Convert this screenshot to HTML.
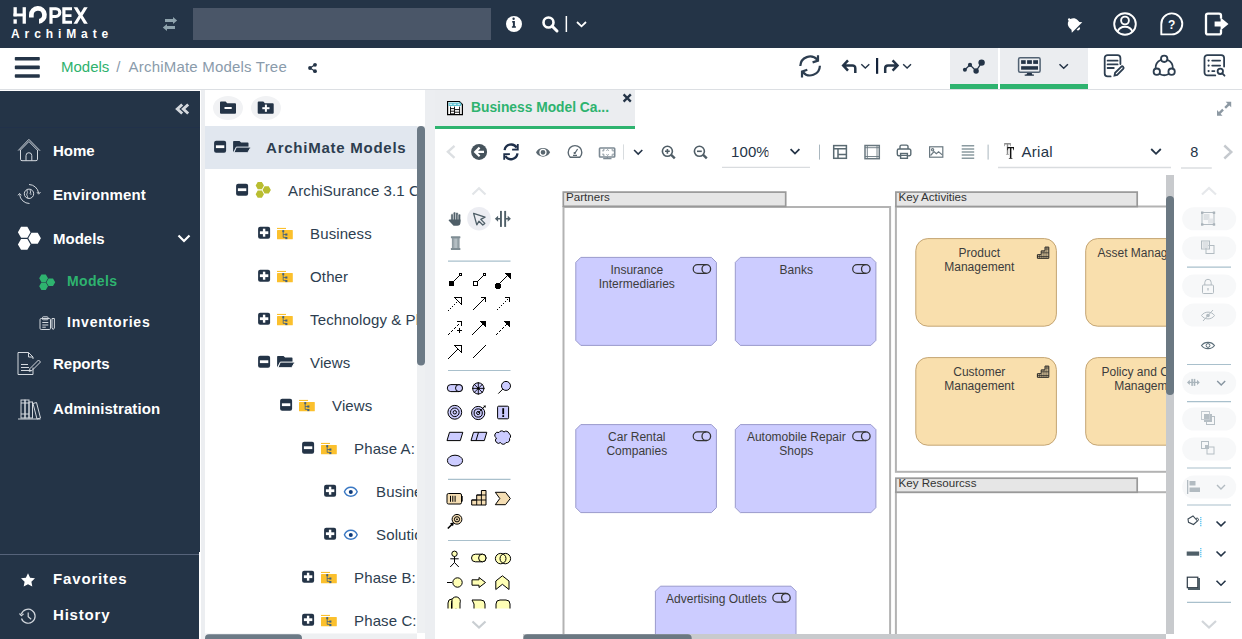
<!DOCTYPE html>
<html><head><meta charset="utf-8">
<style>
*{margin:0;padding:0;box-sizing:border-box}
html,body{width:1242px;height:639px;overflow:hidden;background:#fff;font-family:"Liberation Sans",sans-serif;position:relative}
.a{position:absolute}
svg{position:absolute;overflow:visible}
#hdr{left:0;top:0;width:1242px;height:48px;background:#243447}
#crumb{left:0;top:48px;width:1242px;height:42px;background:#fff;border-bottom:1px solid #dcdfe3}
#side{left:0;top:91px;width:200px;height:548px;background:#243447}
#gap{left:201px;top:90px;width:4px;height:549px;background:#eceef1}
#tree{left:205px;top:90px;width:220px;height:549px;background:#fff;overflow:hidden}
#gap2{left:425px;top:90px;width:10px;height:549px;background:#eceef1}
.mi{position:absolute;left:53px;color:#fff;font-weight:700;font-size:15px;white-space:nowrap;line-height:1}
.tr{position:absolute;color:#2d3e50;font-size:15px;white-space:nowrap;line-height:1}
</style></head><body>

<div id="hdr" class="a">
 <svg width="200" height="48" style="left:0;top:0">
  <g fill="#fff">
   <rect x="13.5" y="7.2" width="3.3" height="9.1"/>
   <rect x="13.5" y="19.3" width="3.3" height="4.4"/>
   <rect x="13.5" y="13.5" width="12" height="2.9"/>
   <rect x="22.6" y="7.2" width="3.3" height="16.5"/>
   <path d="M49.4 7.2h6.6a5.35 5.35 0 0 1 0 10.7h-3.4v5.8h-3.2zM52.6 10.2v4.7h3.3a2.35 2.35 0 0 0 0-4.7z"/>
   <path d="M62.3 7.2h9.7v3h-6.5v4.1h6v2.8h-6v3.6h6.5v3h-9.7z"/>
   <path d="M73.6 7.2h3.8l3.3 5.6l3.3-5.6h3.7l-5.1 8.2l5.2 8.3h-3.8l-3.4-5.7l-3.4 5.7h-3.7l5.2-8.3z"/>
  </g>
  <path d="M29 17.5V15A8.9 8.9 0 1 1 39 23.83V19.05A4.2 4.2 0 1 0 33.7 15V17.5Z" fill="#fff"/>
  <text x="11" y="37.7" fill="#fff" font-family="Liberation Sans" font-weight="700" font-size="12" letter-spacing="4.9">ArchiMate</text>
  <g fill="#8fa3ad">
   <path d="M165 19.1h8v-2.2l4.1 3.6l-4.1 3.5v-2h-8z"/>
   <path d="M175 25.9h-8v-1.9l-4.2 3.5l4.2 3.5v-2.1h8z"/>
  </g>
 </svg>
 <div class="a" style="left:193px;top:8px;width:298px;height:32px;background:#4a5668"></div>
 <svg width="100" height="48" style="left:500px;top:0">
  <circle cx="14" cy="24" r="8" fill="#fff"/>
  <path d="M12.3 21h2.6v5.3h1v1.4h-4v-1.4h1v-3.9h-0.9z M13.6 17.6a1.2 1.2 0 1 1 0 2.4a1.2 1.2 0 1 1 0-2.4z" fill="#243447"/>
  <circle cx="48.5" cy="22.5" r="5" fill="none" stroke="#fff" stroke-width="2.6"/>
  <path d="M52 26l5 5" stroke="#fff" stroke-width="3" stroke-linecap="round"/>
  <rect x="65.6" y="16" width="1.5" height="16" fill="#fff"/>
  <path d="M77 22l4.5 4.3l4.5-4.3" fill="none" stroke="#fff" stroke-width="1.8"/>
 </svg>
 <svg width="180" height="48" style="left:1062px;top:0">
  <g transform="translate(11.6 24) rotate(-45)">
   <path d="M0 -7.5c-0.7 0-1.2 0.5-1.2 1.1v0.7c-2.8 0.6-4.4 2.9-4.4 5.6v2.7l-1.8 2.3h14.8l-1.8-2.3v-2.7c0-2.7-1.6-5-4.4-5.6v-0.7c0-0.6-0.5-1.1-1.2-1.1zM-2 6.2a2 2 0 0 0 4 0z" fill="#fff"/>
  </g>
  <circle cx="63" cy="24" r="10.8" fill="none" stroke="#fff" stroke-width="1.9"/>
  <circle cx="63" cy="20.5" r="3.9" fill="none" stroke="#fff" stroke-width="1.9"/>
  <path d="M55.5 32c1.2-3.5 4-5.2 7.5-5.2s6.3 1.7 7.5 5.2" fill="none" stroke="#fff" stroke-width="1.9"/>
  <path d="M99.3 34.4v-10.2a10.5 10.5 0 1 1 10.5 10.2z" fill="none" stroke="#fff" stroke-width="1.9" stroke-linejoin="round"/>
  <text x="109.6" y="29" fill="#fff" font-family="Liberation Sans" font-weight="700" font-size="12" text-anchor="middle">?</text>
  <path d="M159 18.5V15.6a2 2 0 0 0-2-2h-11a2 2 0 0 0-2 2v16.8a2 2 0 0 0 2 2h11a2 2 0 0 0 2-2v-3" fill="none" stroke="#fff" stroke-width="2.3"/>
  <path d="M152.6 21.6h6v-4.2l7.9 6.6l-7.9 6.6v-4.2h-6z" fill="#fff"/>
 </svg>
</div>


<div id="crumb" class="a">
 <svg width="60" height="42" style="left:0;top:0">
  <g fill="#243447"><rect x="14.8" y="9" width="25" height="3.6" rx="0.8"/><rect x="14.8" y="17.6" width="25" height="3.6" rx="0.8"/><rect x="14.8" y="26.2" width="25" height="3.6" rx="0.8"/></g>
 </svg>
 <div class="a" style="left:61px;top:10px;font-size:15px;line-height:18px;white-space:nowrap;color:#8a9bab"><span style="color:#2eb26d">Models</span><span style="margin:0 8px 0 7px">/</span><span style="letter-spacing:0.2px">ArchiMate Models Tree</span></div>
 <svg width="1242" height="90" style="left:0;top:-48px">
  <g fill="#243447"><circle cx="310" cy="68" r="1.9"/><circle cx="315" cy="64.8" r="1.9"/><circle cx="315" cy="71.2" r="1.9"/></g>
  <path d="M315 64.8L310 68L315 71.2" stroke="#243447" stroke-width="1.2" fill="none"/>
  <g fill="none" stroke="#2d3e50" stroke-width="2.2">
   <path d="M800.3 66A9.8 9.8 0 0 1 817.4 59.8"/>
   <path d="M818 55.2V60.6L812.6 62.4"/>
   <path d="M819.9 65.8A9.8 9.8 0 0 1 802.7 72"/>
   <path d="M802 77.4V71.6L807.3 69.8"/>
  </g>
  <g fill="none" stroke="#243447" stroke-width="2.5">
   <path d="M848 60.3L843.2 65.4L848 70.6M843.2 65.4H852.5a2.8 2.8 0 0 1 2.8 2.8V73"/>
   <path d="M892.6 60.3L897.5 65.4L892.6 70.6M897.5 65.4H888a2.8 2.8 0 0 0-2.8 2.8V73"/>
  </g>
  <g fill="none" stroke="#243447" stroke-width="1.4">
   <path d="M861.3 64.2L865.3 68L869.3 64.2"/>
   <path d="M903.2 64.2L907.1 68L911 64.2"/>
  </g>
  <rect x="876" y="58" width="2.2" height="15.8" fill="#14233a"/>
  <rect x="950" y="48" width="48" height="36" fill="#ebedf0"/>
  <rect x="950" y="84" width="48" height="5" fill="#2eb36f"/>
  <rect x="1000" y="48" width="88" height="36" fill="#ebedf0"/>
  <rect x="1000" y="84" width="88" height="5" fill="#2eb36f"/>
  <g fill="#243447">
   <circle cx="964.9" cy="69.7" r="2"/><circle cx="970" cy="64.9" r="2.1"/><circle cx="976.1" cy="71" r="2.7"/><circle cx="981.6" cy="62.6" r="3.2"/>
  </g>
  <path d="M964.9 69.7L970 64.9L976.1 71L981.6 62.6" stroke="#243447" stroke-width="1.3" fill="none"/>
  <rect x="1018.6" y="57.7" width="21.5" height="14.6" rx="1.5" fill="none" stroke="#526273" stroke-width="1.5"/>
  <g fill="#243447">
   <rect x="1021.1" y="60.2" width="4.6" height="3.7"/><rect x="1027.1" y="60.2" width="4.8" height="3.7"/><rect x="1033.2" y="60.2" width="4.8" height="3.7"/>
   <rect x="1021.1" y="66.2" width="16.9" height="3.5"/>
   <path d="M1027.3 72.9h4.4l0.6 1.6h1.6v1.3h-9.2v-1.3h1.6z"/>
  </g>
  <path d="M1059.5 64.3L1063.7 68.3L1067.9 64.3" stroke="#243447" stroke-width="1.5" fill="none"/>
  <g fill="none" stroke="#2d3e50" stroke-width="1.8" stroke-linecap="round">
   <path d="M1120.4 64V58a2.9 2.9 0 0 0-2.9-2.9H1107.6a2.9 2.9 0 0 0-2.9 2.9V73.5a2.9 2.9 0 0 0 2.9 2.9H1110.6"/>
   <path d="M1107.6 60.7H1117.6M1107.6 64.4H1117.6M1107.6 68H1113.8"/>
   <path d="M1114.5 75.6l0.6-2.8l6-6a1.45 1.45 0 0 1 2.1 2.1l-6 6z"/>
   <circle cx="1164.2" cy="58.8" r="3.2"/><circle cx="1156.8" cy="71.7" r="3.2"/><circle cx="1171.6" cy="71.7" r="3.2"/>
   <path d="M1160.7 60A8.7 8.7 0 0 0 1155.6 68.3M1167.7 60A8.7 8.7 0 0 1 1172.8 68.3M1160.2 74.2A8.7 8.7 0 0 0 1168.2 74.2"/>
   <path d="M1224.1 66.5V58a2.9 2.9 0 0 0-2.9-2.9H1207.4a2.9 2.9 0 0 0-2.9 2.9V72.5a2.9 2.9 0 0 0 2.9 2.9H1215.3"/>
   <path d="M1212.2 60.6H1220.1M1212.2 65.6H1220.1M1212.2 71.1H1214.4"/>
   <circle cx="1220.3" cy="71.3" r="2.7"/><path d="M1222.3 73.4L1224.5 75.7"/>
  </g>
  <g fill="#2d3e50"><circle cx="1208.6" cy="60.6" r="1.1"/><circle cx="1208.6" cy="65.6" r="1.1"/><circle cx="1208.6" cy="71.1" r="1.1"/></g>
 </svg>
</div>


<div id="side" class="a"></div>
<div class="a" style="left:0;top:554px;width:199px;height:1px;background:#56637a"></div><div class="a" style="left:0;top:127px;width:200px;height:1px;background:#21314a"></div><div class="a" style="left:200px;top:91px;width:1px;height:461px;background:#fff"></div><div class="a" style="left:199px;top:552px;width:2px;height:87px;background:#fff"></div>
<svg width="210" height="639" style="left:0;top:0">
 <path d="M182.2 104.5L177.3 109L182.2 113.5M188.2 104.5L183.3 109L188.2 113.5" fill="none" stroke="#d5d9de" stroke-width="2.9"/>
 <g fill="none" stroke="#d3d8de" stroke-width="1">
  <path d="M18.2 150.5L28.9 139.4L40 150.7M20 150.5L28.9 141.5L37.9 150.6"/>
  <path d="M20.5 150V159.2a1.5 1.5 0 0 0 1.5 1.5H36a1.5 1.5 0 0 0 1.5-1.5V150"/>
  <path d="M26 160.7V155.6a2.9 2.9 0 0 1 5.8 0V160.7"/>
  <circle cx="29" cy="193.8" r="4.7"/>
  <path d="M27.6 189.5c-1.4 1.3 0.6 2.6-0.6 4c-0.9 1.1 0.6 2.3 0.9 4.5M30.6 189.4c-1.2 1.2 0.9 2.3-0.4 3.6c-0.6 0.7 0.2 1.4 1.3 1.1"/>
  <path d="M29 184.5A10 10 0 0 1 38.6 193"/>
  <path d="M37 192.2L38.6 194.2L40.5 192"/>
  <path d="M29.5 203.5A10 10 0 0 1 19.6 194.4"/>
  <path d="M18 195.3L19.6 193.4L21.4 195.3"/>
 </g>
 <path d="M30.50 232.20L27.35 237.66L21.05 237.66L17.90 232.20L21.05 226.74L27.35 226.74ZM40.90 238.30L37.75 243.76L31.45 243.76L28.30 238.30L31.45 232.84L37.75 232.84ZM30.50 244.40L27.35 249.86L21.05 249.86L17.90 244.40L21.05 238.94L27.35 238.94Z" fill="#fff"/>
 <path d="M178.5 235.5L184 241L189.5 235.5" fill="none" stroke="#fff" stroke-width="2.2"/>
 <path d="M48.00 278.20L45.80 282.01L41.40 282.01L39.20 278.20L41.40 274.39L45.80 274.39ZM55.20 282.20L53.00 286.01L48.60 286.01L46.40 282.20L48.60 278.39L53.00 278.39ZM48.00 286.20L45.80 290.01L41.40 290.01L39.20 286.20L41.40 282.39L45.80 282.39Z" fill="#2eb36f"/>
 <g fill="none" stroke="#d3d8de" stroke-width="1">
  <rect x="40" y="318.5" width="10.5" height="11" rx="1.2"/>
  <rect x="42.5" y="316.8" width="5.5" height="3" rx="0.8"/>
  <path d="M42.3 322.5h6M42.3 325h6M42.3 327.2h3.5"/>
  <path d="M52 318.5v9.5l1.2 1.5l1.2-1.5v-9.5z"/>
  <path d="M18 352.5h10.5l4.5 4.5v2M18 352.5v22h15v-7"/>
  <path d="M28.5 352.5v4.5h4.5"/>
  <path d="M21 364.5h7M21 367.5h8M21 370.5h10"/>
  <path d="M30 368.5l8.5-8.5l2 2l-8.5 8.5l-2.8 0.8z"/>
  <path d="M18 419h22.5"/>
  <rect x="21" y="400" width="4" height="18"/><rect x="25" y="400" width="4" height="18"/><rect x="29" y="402" width="3.5" height="16"/>
  <path d="M33 403.5l3.5-1l4 15.5l-3.5 1z"/>
  <path d="M21 403h8M21 414h8"/>
 </g>
 <path d="M28 573.2l2.1 4.5l4.9 0.6l-3.6 3.4l0.9 4.9l-4.3-2.4l-4.3 2.4l0.9-4.9l-3.6-3.4l4.9-0.6z" fill="#fff"/>
 <g fill="none" stroke="#d3d8de" stroke-width="1.2">
  <path d="M21.4 614.2A7 7 0 1 1 21.5 618.5"/>
  <path d="M19.5 613.5l1.9 2.2l2.2-1.8" />
  <path d="M28.2 612.5v4.3l3 2.5"/>
 </g>
 <g font-family="Liberation Sans" font-weight="700" font-size="15" fill="#fff">
  <text x="53" y="155.6">Home</text>
  <text x="53" y="199.6" letter-spacing="0.1">Environment</text>
  <text x="53" y="243.6">Models</text>
  <text x="67" y="286.2" font-size="14" fill="#2eb36f" letter-spacing="0.35">Models</text>
  <text x="67" y="327.2" font-size="14" letter-spacing="0.8">Inventories</text>
  <text x="53" y="369.3">Reports</text>
  <text x="53" y="413.7" letter-spacing="0.1">Administration</text>
  <text x="53" y="584" letter-spacing="0.85">Favorites</text>
  <text x="53" y="620.4" letter-spacing="0.8">History</text>
 </g>
</svg>

<div id="gap" class="a"></div>

<div id="tree" class="a">
 <svg width="220" height="549" style="left:-205px;top:-90px">
  <defs><clipPath id="tc"><rect x="205" y="90" width="212" height="549"/></clipPath></defs>
  <ellipse cx="228" cy="108" rx="15" ry="12" fill="#f1f2f4"/>
  <ellipse cx="266" cy="108" rx="15" ry="12" fill="#f1f2f4"/>
  <path d="M220 102.6a1 1 0 0 1 1-1h4.6l1.6 1.6h7.8a1 1 0 0 1 1 1v8.6a1 1 0 0 1-1 1h-14a1 1 0 0 1-1-1z" fill="#243447"/>
  <rect x="224.5" y="107" width="7.2" height="2" fill="#fff"/>
  <path d="M257.7 102.6a1 1 0 0 1 1-1h4.6l1.6 1.6h7.8a1 1 0 0 1 1 1v8.6a1 1 0 0 1-1 1h-14a1 1 0 0 1-1-1z" fill="#243447"/>
  <rect x="262.3" y="107.2" width="7.2" height="2" fill="#fff"/><rect x="264.9" y="104.6" width="2" height="7.2" fill="#fff"/>
  <rect x="205" y="126" width="212" height="43" fill="#e1e7ef"/>
  <g clip-path="url(#tc)">
  <rect x="214.1" y="140.7" width="12" height="12" rx="2" fill="#243447"/><rect x="215.9" y="145.3" width="8.4" height="2.8" fill="#fff"/><path d="M233.1 149.7V141.7a0.8 0.8 0 0 1 0.8-0.8h5.6l1.6 1.6h6.6a0.8 0.8 0 0 1 0.8 0.8V147.1H236.3L233.1 152.3Z" fill="#243447"/><path d="M236.3 147.1H251.0L247.6 152.7H233.9Z" fill="#243447" stroke="#e1e7ef" stroke-width="1"/><rect x="236.1" y="183.7" width="12" height="12" rx="2" fill="#243447"/><rect x="237.9" y="188.3" width="8.4" height="2.8" fill="#fff"/><path d="M263.95 185.60L261.88 189.19L257.73 189.19L255.65 185.60L257.73 182.01L261.88 182.01ZM270.85 189.90L268.77 193.49L264.62 193.49L262.55 189.90L264.62 186.31L268.77 186.31ZM263.95 194.20L261.88 197.79L257.73 197.79L255.65 194.20L257.73 190.61L261.88 190.61Z" fill="#b9bd30"/><rect x="258.1" y="226.7" width="12" height="12" rx="2" fill="#243447"/><rect x="259.90000000000003" y="231.3" width="8.4" height="2.8" fill="#fff"/><rect x="262.90000000000003" y="228.7" width="2.4" height="8" fill="#fff"/><rect x="277.0" y="227.9" width="9" height="1.1" fill="#fbc02d"/><rect x="277.0" y="229.9" width="15.8" height="9.4" rx="0.6" fill="#fbc02d"/><path d="M283.2 231.2v6.2h2.9M283.2 234.5h2.9" stroke="#41607e" stroke-width="0.8" fill="none"/><rect x="282.3" y="230.1" width="1.9" height="2.1" fill="#41607e"/><rect x="285.3" y="233.5" width="2.1" height="2.1" fill="#41607e"/><rect x="285.3" y="237.0" width="2.1" height="2.1" fill="#41607e"/><rect x="258.1" y="269.7" width="12" height="12" rx="2" fill="#243447"/><rect x="259.90000000000003" y="274.3" width="8.4" height="2.8" fill="#fff"/><rect x="262.90000000000003" y="271.7" width="2.4" height="8" fill="#fff"/><rect x="277.0" y="270.9" width="9" height="1.1" fill="#fbc02d"/><rect x="277.0" y="272.9" width="15.8" height="9.4" rx="0.6" fill="#fbc02d"/><path d="M283.2 274.2v6.2h2.9M283.2 277.5h2.9" stroke="#41607e" stroke-width="0.8" fill="none"/><rect x="282.3" y="273.1" width="1.9" height="2.1" fill="#41607e"/><rect x="285.3" y="276.5" width="2.1" height="2.1" fill="#41607e"/><rect x="285.3" y="280.0" width="2.1" height="2.1" fill="#41607e"/><rect x="258.1" y="312.7" width="12" height="12" rx="2" fill="#243447"/><rect x="259.90000000000003" y="317.3" width="8.4" height="2.8" fill="#fff"/><rect x="262.90000000000003" y="314.7" width="2.4" height="8" fill="#fff"/><rect x="277.0" y="313.9" width="9" height="1.1" fill="#fbc02d"/><rect x="277.0" y="315.9" width="15.8" height="9.4" rx="0.6" fill="#fbc02d"/><path d="M283.2 317.2v6.2h2.9M283.2 320.5h2.9" stroke="#41607e" stroke-width="0.8" fill="none"/><rect x="282.3" y="316.1" width="1.9" height="2.1" fill="#41607e"/><rect x="285.3" y="319.5" width="2.1" height="2.1" fill="#41607e"/><rect x="285.3" y="323.0" width="2.1" height="2.1" fill="#41607e"/><rect x="258.1" y="355.7" width="12" height="12" rx="2" fill="#243447"/><rect x="259.90000000000003" y="360.3" width="8.4" height="2.8" fill="#fff"/><path d="M277.1 364.7V356.7a0.8 0.8 0 0 1 0.8-0.8h5.6l1.6 1.6h6.6a0.8 0.8 0 0 1 0.8 0.8V362.1H280.3L277.1 367.3Z" fill="#243447"/><path d="M280.3 362.1H295.0L291.6 367.7H277.9Z" fill="#243447" stroke="#fff" stroke-width="1"/><rect x="280.1" y="398.7" width="12" height="12" rx="2" fill="#243447"/><rect x="281.90000000000003" y="403.3" width="8.4" height="2.8" fill="#fff"/><rect x="299.0" y="399.9" width="9" height="1.1" fill="#fbc02d"/><rect x="299.0" y="401.9" width="15.8" height="9.4" rx="0.6" fill="#fbc02d"/><path d="M305.2 403.2v6.2h2.9M305.2 406.5h2.9" stroke="#41607e" stroke-width="0.8" fill="none"/><rect x="304.3" y="402.1" width="1.9" height="2.1" fill="#41607e"/><rect x="307.3" y="405.5" width="2.1" height="2.1" fill="#41607e"/><rect x="307.3" y="409.0" width="2.1" height="2.1" fill="#41607e"/><rect x="302.1" y="441.7" width="12" height="12" rx="2" fill="#243447"/><rect x="303.90000000000003" y="446.3" width="8.4" height="2.8" fill="#fff"/><rect x="321.0" y="442.9" width="9" height="1.1" fill="#fbc02d"/><rect x="321.0" y="444.9" width="15.8" height="9.4" rx="0.6" fill="#fbc02d"/><path d="M327.2 446.2v6.2h2.9M327.2 449.5h2.9" stroke="#41607e" stroke-width="0.8" fill="none"/><rect x="326.3" y="445.1" width="1.9" height="2.1" fill="#41607e"/><rect x="329.3" y="448.5" width="2.1" height="2.1" fill="#41607e"/><rect x="329.3" y="452.0" width="2.1" height="2.1" fill="#41607e"/><rect x="324.1" y="484.7" width="12" height="12" rx="2" fill="#243447"/><rect x="325.90000000000003" y="489.3" width="8.4" height="2.8" fill="#fff"/><rect x="328.90000000000003" y="486.7" width="2.4" height="8" fill="#fff"/><path d="M344.4 491.7C346.9 485.7 354.7 485.7 357.2 491.7C354.7 497.7 346.9 497.7 344.4 491.7z" fill="none" stroke="#3a78c3" stroke-width="1.4"/><circle cx="350.8" cy="491.9" r="2" fill="#0d3a7a"/><rect x="324.1" y="527.7" width="12" height="12" rx="2" fill="#243447"/><rect x="325.90000000000003" y="532.3" width="8.4" height="2.8" fill="#fff"/><rect x="328.90000000000003" y="529.7" width="2.4" height="8" fill="#fff"/><path d="M344.4 534.7C346.9 528.7 354.7 528.7 357.2 534.7C354.7 540.7 346.9 540.7 344.4 534.7z" fill="none" stroke="#3a78c3" stroke-width="1.4"/><circle cx="350.8" cy="534.9" r="2" fill="#0d3a7a"/><rect x="302.1" y="570.7" width="12" height="12" rx="2" fill="#243447"/><rect x="303.90000000000003" y="575.3" width="8.4" height="2.8" fill="#fff"/><rect x="306.90000000000003" y="572.7" width="2.4" height="8" fill="#fff"/><rect x="321.0" y="571.9" width="9" height="1.1" fill="#fbc02d"/><rect x="321.0" y="573.9" width="15.8" height="9.4" rx="0.6" fill="#fbc02d"/><path d="M327.2 575.2v6.2h2.9M327.2 578.5h2.9" stroke="#41607e" stroke-width="0.8" fill="none"/><rect x="326.3" y="574.1" width="1.9" height="2.1" fill="#41607e"/><rect x="329.3" y="577.5" width="2.1" height="2.1" fill="#41607e"/><rect x="329.3" y="581.0" width="2.1" height="2.1" fill="#41607e"/><rect x="302.1" y="613.7" width="12" height="12" rx="2" fill="#243447"/><rect x="303.90000000000003" y="618.3" width="8.4" height="2.8" fill="#fff"/><rect x="306.90000000000003" y="615.7" width="2.4" height="8" fill="#fff"/><rect x="321.0" y="614.9" width="9" height="1.1" fill="#fbc02d"/><rect x="321.0" y="616.9" width="15.8" height="9.4" rx="0.6" fill="#fbc02d"/><path d="M327.2 618.2v6.2h2.9M327.2 621.5h2.9" stroke="#41607e" stroke-width="0.8" fill="none"/><rect x="326.3" y="617.1" width="1.9" height="2.1" fill="#41607e"/><rect x="329.3" y="620.5" width="2.1" height="2.1" fill="#41607e"/><rect x="329.3" y="624.0" width="2.1" height="2.1" fill="#41607e"/>
  <g font-family="Liberation Sans" font-size="15" fill="#2d3e50"><text x="266.1" y="152.8" font-weight="700" letter-spacing="0.75">ArchiMate Models</text><text x="288.1" y="195.8" letter-spacing="0.1">ArchiSurance 3.1 Capabilities</text><text x="310.1" y="238.8" letter-spacing="0.1">Business</text><text x="310.1" y="281.8" letter-spacing="0.1">Other</text><text x="310.1" y="324.8" letter-spacing="0.1">Technology &amp; Physical</text><text x="310.1" y="367.8" letter-spacing="0.1">Views</text><text x="332.1" y="410.8" letter-spacing="0.1">Views</text><text x="354.1" y="453.8" letter-spacing="0.1">Phase A: Architecture</text><text x="376.1" y="496.8" letter-spacing="0.1">Business Model</text><text x="376.1" y="539.8" letter-spacing="0.1">Solution</text><text x="354.1" y="582.8" letter-spacing="0.1">Phase B: Business</text><text x="354.1" y="625.8" letter-spacing="0.1">Phase C: Data</text></g>
  </g>
  <rect x="417" y="126" width="8" height="507" fill="#eef0f2"/>
  <rect x="417" y="126" width="8" height="239.5" rx="4" fill="#6c7a86"/>
  <rect x="205" y="633.5" width="212" height="6" fill="#eef0f2"/>
  <rect x="205" y="634.2" width="97" height="8" rx="4" fill="#6c7a86"/>
 </svg>
</div>


<div id="gap2" class="a"></div>
<svg width="1242" height="639" style="left:0;top:0">
 <rect x="435" y="90" width="200" height="36" fill="#ebedf0"/>
 <rect x="435" y="126" width="200" height="3" fill="#2eb36f"/>
 <g>
  <path d="M447.6 101.5H459.4L462.4 104.5V114.6H447.6Z" fill="#fff" stroke="#000" stroke-width="1.2"/>
  <rect x="448.6" y="102.6" width="12.6" height="3.4" fill="#5ec3d4"/>
  <path d="M449.6 104.3h2.6M453.6 104.3h2.6M457.6 104.3h2.4" stroke="#fff" stroke-width="0.9"/>
  <path d="M450.5 106.6V114M454.5 106.6V114M459.6 106.6V114M450.5 108.6H454.5M450.5 111.2H454.5M455 109.6H459.6M455 112.2H459.6" stroke="#000" stroke-width="0.9" fill="none"/>
  <path d="M450.5 113.8H454.5" stroke="#000" stroke-width="0.9"/>
 </g>
 <text x="471" y="112.2" font-family="Liberation Sans" font-weight="700" font-size="13.8" fill="#2eb36f">Business Model Ca...</text>
 <path d="M623.6 94.4l7.2 7.2M630.8 94.4l-7.2 7.2" stroke="#243447" stroke-width="2.3"/>
 <g fill="#8d99a3">
  <path d="M1231.2 101.7v5.6l-1.9-1.9l-3.3 3.3l-1.7-1.7l3.3-3.3l-1.9-2z"/>
  <path d="M1217 115.7v-5.6l1.9 1.9l3.3-3.3l1.7 1.7l-3.3 3.3l1.9 2z"/>
 </g>
 <!-- toolbar -->
 <path d="M454.5 145.8L447.9 151.8L454.5 157.9" fill="none" stroke="#dcdfe2" stroke-width="2.4"/>
 <circle cx="479.1" cy="151.9" r="8" fill="#46535c"/>
 <path d="M479.6 147.6L475.2 151.9L479.6 156.2M475.5 151.9H484" fill="none" stroke="#fff" stroke-width="2.2"/>
 <g fill="none" stroke="#1e2f4a" stroke-width="2.3">
  <path d="M504.6 150.2A6.6 6.6 0 0 1 516.7 147.6"/>
  <path d="M517.5 153.4A6.6 6.6 0 0 1 505.3 156"/>
 </g>
 <path d="M516.9 143.9h1.8v6.6h-6.6v-1.8l4.8-0.3z" fill="#1e2f4a"/>
 <path d="M505.1 159.8h-1.8v-6.6h6.6v1.8l-4.8 0.3z" fill="#1e2f4a"/>
 <path d="M536 152.3C538.5 146.5 547.6 146.5 550.1 152.3C547.6 158.1 538.5 158.1 536 152.3z" fill="#5a6770"/>
 <circle cx="543" cy="152.3" r="3" fill="none" stroke="#fff" stroke-width="1.3"/>
 <circle cx="543" cy="152.3" r="1.3" fill="#5a6770"/>
 <g fill="none" stroke="#5a6770" stroke-width="1.4">
  <path d="M570.2 157.2A6.8 6.8 0 1 1 579.8 157.2Z" stroke-linejoin="round"/>
  <path d="M573 155.3h4M574.6 153.6l3-4.6" stroke-width="1.2"/>
 </g>
 <circle cx="574.6" cy="153" r="1.1" fill="#5a6770"/>
 <g fill="none" stroke="#7d8a94">
  <rect x="599.5" y="148" width="15.2" height="9" rx="0.8" stroke-width="1.6"/>
  <path d="M603.2 158.6h8.3M607.3 157v1.6" stroke-width="1.2"/>
  <path d="M603 151.5v-1.6h1.6M611.5 149.9h1.6v1.6M613.1 153.5v1.6h-1.6M604.6 155.1h-1.6v-1.6M606.5 150.5l1.1-0.8l1.1 0.8M606.5 154.5l1.1 0.8l1.1-0.8" stroke-width="1"/>
 </g>
 <rect x="623" y="144.4" width="1" height="15.2" fill="#d8dcdf"/>
 <path d="M634.1 150L638.2 154.1L642.3 150" fill="none" stroke="#243447" stroke-width="1.6"/>
 <g fill="none" stroke="#4f5d66" stroke-width="1.6">
  <circle cx="667.4" cy="151.3" r="5"/><path d="M665 151.3h4.8M667.4 148.9v4.8"/>
  <circle cx="699.4" cy="151.3" r="5"/><path d="M697 151.3h4.8"/>
 </g>
 <path d="M671.2 154.9L674.8 158.3M703.2 154.9L706.8 158.3" stroke="#4f5d66" stroke-width="2.4"/>
 <text x="731" y="157.3" font-family="Liberation Sans" font-size="15" fill="#243447" letter-spacing="0.1">100%</text>
 <rect x="768.5" y="140" width="10" height="20" fill="#fff"/>
 <path d="M790.6 149.2L795 153.6L799.4 149.2" fill="none" stroke="#243447" stroke-width="1.8"/>
 <path d="M722 167.4H810" stroke="#d9dcdf" stroke-width="1.4"/>
 <rect x="819" y="144.6" width="1" height="15" fill="#aab7bf"/>
 <g fill="none" stroke="#5a6a72" stroke-width="1.5">
  <rect x="833.7" y="145.6" width="12.7" height="12.7"/>
  <path d="M833.7 148.8H846.4M838 148.8V158.3M838 154.4H846.4"/>
 </g>
 <g fill="none" stroke="#6a7880">
  <rect x="865" y="145.5" width="14.3" height="13.2" stroke-width="1.5"/>
  <path d="M867.3 145.5v13.2M877 145.5v13.2M865 147.7h14.3M865 156.5h14.3" stroke-width="0.9"/>
 </g>
 <g fill="none" stroke="#5a6a72" stroke-width="1.4">
  <path d="M900 149v-2.4a1.5 1.5 0 0 1 1.5-1.5h5a1.5 1.5 0 0 1 1.5 1.5v2.4"/>
  <path d="M900 155.7h-1.2a1.5 1.5 0 0 1-1.5-1.5v-3.7a1.5 1.5 0 0 1 1.5-1.5h10.5a1.5 1.5 0 0 1 1.5 1.5v3.7a1.5 1.5 0 0 1-1.5 1.5h-1.2"/>
  <rect x="900.6" y="153.5" width="6.8" height="4.8"/>
 </g>
 <rect x="900.6" y="154.8" width="6.8" height="1.2" fill="#5a6a72"/>
 <g fill="none" stroke="#6a7880" stroke-width="1.2">
  <rect x="929.6" y="146.8" width="13.2" height="10.4"/>
  <circle cx="932.6" cy="149.8" r="1.1"/>
  <path d="M930.5 155.5l3.5-4l2.3 2.2l2.3-2l3.7 3.2"/>
 </g>
 <g stroke="#8a9aa0" stroke-width="1.5">
  <path d="M961.7 145.8h12.5M961.7 148.9h12.5M961.7 152h12.5M961.7 155.1h12.5M961.7 158.2h12.5"/>
 </g>
 <rect x="987.6" y="144.6" width="1" height="15" fill="#aab7bf"/>
 <path d="M998 167.5H1171" stroke="#d9dcdf" stroke-width="1.4"/>
 <path d="M1004.2 143.1h6.6v3.2h-0.5l-0.5-1.9h-1.6v9.6l0.9 0.4v0.4h-3.2v-0.4l0.9-0.4v-9.6h-1.6l-0.5 1.9h-0.5z" fill="#8c8c8c"/>
 <path d="M1007.3 146.9h6.7v3.3h-0.5l-0.5-1.9h-1.6v9.6l1.1 0.4v0.5h-3.7v-0.5l1.1-0.4v-9.6h-1.6l-0.5 1.9h-0.5z" fill="#111"/>
 <text x="1021.5" y="157.2" font-family="Liberation Sans" font-size="15" fill="#243447" letter-spacing="0.3">Arial</text>
 <path d="M1151.2 149L1156 153.8L1160.8 149" fill="none" stroke="#243447" stroke-width="1.8"/>
 <text x="1190.2" y="157.2" font-family="Liberation Sans" font-size="14.5" fill="#243447">8</text>
 <path d="M1181 168H1211.8" stroke="#d9dcdf" stroke-width="1.4"/>
 <path d="M1224.3 145.5L1231.3 152L1224.3 158.5" fill="none" stroke="#c5c9ce" stroke-width="2.4"/>
</svg>


<svg width="1242" height="639" style="left:0;top:0">
 <defs>
  <clipPath id="cvclip"><rect x="520" y="175" width="646" height="459"/></clipPath>
  <clipPath id="palclip"><rect x="440" y="590" width="80" height="18.5"/></clipPath>
 </defs>
 <path d="M472.5 194.5L479 188.3L485.5 194.5" fill="none" stroke="#e2e5e8" stroke-width="2.2"/>
 <g fill="#4f5f68" stroke="#fff" stroke-width="0.5"><rect x="450.9" y="213.8" width="2.5" height="8" rx="1.2"/><rect x="453.3" y="212" width="2.5" height="9" rx="1.2"/><rect x="455.7" y="212.4" width="2.5" height="9" rx="1.2"/><rect x="458.1" y="214" width="2.5" height="8" rx="1.2"/></g><path d="M451 219.5H460.5V222.2Q460.5 225.8 457.2 225.8H453.6L448.6 220.6Q448.8 219.3 450.2 219.6Z" fill="#4f5f68"/>
 <circle cx="479" cy="218.7" r="11.8" fill="#ecedf2"/>
 <path d="M473.6 213.3L485 217.2L480.8 219.4L484.8 223.4L482.8 225L479 221.2L476.8 224.8Z" fill="none" stroke="#4f5f68" stroke-width="1.3" stroke-linejoin="round"/>
 <rect x="500" y="210.9" width="1.9" height="16" fill="#4f5f68"/><rect x="504.2" y="210.9" width="1.9" height="16" fill="#4f5f68"/>
 <path d="M494.9 218.7l3.2-3v6z M510.9 218.7l-3.2-3v6z" fill="#4f5f68"/><path d="M497 218.7h3M506 218.7h3" stroke="#4f5f68" stroke-width="1.4"/>
 <rect x="452.3" y="237.5" width="6.8" height="11.5" fill="#9aa6ac" stroke="#7f8d94" stroke-width="0.8"/><rect x="454.3" y="238.5" width="2.8" height="9.5" fill="#b4bec3"/><rect x="450.9" y="236.3" width="9.5" height="2" rx="0.5" fill="#7f8d94"/><rect x="450.9" y="248.1" width="9.5" height="2" rx="0.5" fill="#7f8d94"/>
 <path d="M448 261.2H510.5" stroke="#a9c0cc" stroke-width="1.2"/>
 <path d="M448 370.5H510.5" stroke="#a9c0cc" stroke-width="1.2"/>
 <path d="M448 479.4H510.5" stroke="#a9c0cc" stroke-width="1.2"/>
 <path d="M448 540.5H510.5" stroke="#a9c0cc" stroke-width="1.2"/>
 <path d="M448 310h1v1h-1zM448 334h1v1h-1zM448 358h1v1h-1zM449 281h1v1h-1zM449 282h1v1h-1zM449 283h1v1h-1zM449 284h1v1h-1zM449 285h1v1h-1zM449 333h1v1h-1zM449 357h1v1h-1zM450 281h1v1h-1zM450 282h1v1h-1zM450 283h1v1h-1zM450 284h1v1h-1zM450 285h1v1h-1zM450 308h1v1h-1zM450 356h1v1h-1zM451 281h1v1h-1zM451 282h1v1h-1zM451 283h1v1h-1zM451 284h1v1h-1zM451 285h1v1h-1zM451 331h1v1h-1zM451 355h1v1h-1zM452 281h1v1h-1zM452 282h1v1h-1zM452 283h1v1h-1zM452 284h1v1h-1zM452 285h1v1h-1zM452 306h1v1h-1zM452 330h1v1h-1zM452 354h1v1h-1zM453 281h1v1h-1zM453 282h1v1h-1zM453 283h1v1h-1zM453 284h1v1h-1zM453 285h1v1h-1zM453 353h1v1h-1zM454 280h1v1h-1zM454 297h1v1h-1zM454 304h1v1h-1zM454 328h1v1h-1zM454 345h1v1h-1zM454 352h1v1h-1zM455 279h1v1h-1zM455 297h1v1h-1zM455 298h1v1h-1zM455 327h1v1h-1zM455 345h1v1h-1zM455 346h1v1h-1zM455 351h1v1h-1zM456 278h1v1h-1zM456 297h1v1h-1zM456 299h1v1h-1zM456 302h1v1h-1zM456 345h1v1h-1zM456 347h1v1h-1zM456 350h1v1h-1zM457 277h1v1h-1zM457 297h1v1h-1zM457 300h1v1h-1zM457 321h1v1h-1zM457 325h1v1h-1zM457 330h1v1h-1zM457 345h1v1h-1zM457 348h1v1h-1zM457 349h1v1h-1zM458 276h1v1h-1zM458 297h1v1h-1zM458 301h1v1h-1zM458 321h1v1h-1zM458 324h1v1h-1zM458 330h1v1h-1zM458 345h1v1h-1zM458 349h1v1h-1zM459 273h1v1h-1zM459 274h1v1h-1zM459 275h1v1h-1zM459 297h1v1h-1zM459 302h1v1h-1zM459 321h1v1h-1zM459 328h1v1h-1zM459 329h1v1h-1zM459 330h1v1h-1zM459 331h1v1h-1zM459 332h1v1h-1zM459 345h1v1h-1zM459 350h1v1h-1zM460 273h1v1h-1zM460 275h1v1h-1zM460 297h1v1h-1zM460 303h1v1h-1zM460 321h1v1h-1zM460 330h1v1h-1zM460 345h1v1h-1zM460 351h1v1h-1zM461 273h1v1h-1zM461 274h1v1h-1zM461 275h1v1h-1zM461 297h1v1h-1zM461 298h1v1h-1zM461 299h1v1h-1zM461 300h1v1h-1zM461 301h1v1h-1zM461 302h1v1h-1zM461 303h1v1h-1zM461 304h1v1h-1zM461 321h1v1h-1zM461 322h1v1h-1zM461 323h1v1h-1zM461 324h1v1h-1zM461 325h1v1h-1zM461 330h1v1h-1zM461 345h1v1h-1zM461 346h1v1h-1zM461 347h1v1h-1zM461 348h1v1h-1zM461 349h1v1h-1zM461 350h1v1h-1zM461 351h1v1h-1zM461 352h1v1h-1zM472 334h1v1h-1zM473 281h1v1h-1zM473 282h1v1h-1zM473 283h1v1h-1zM473 284h1v1h-1zM473 285h1v1h-1zM473 309h1v1h-1zM473 333h1v1h-1zM473 357h1v1h-1zM474 281h1v1h-1zM474 285h1v1h-1zM474 308h1v1h-1zM474 332h1v1h-1zM474 356h1v1h-1zM475 281h1v1h-1zM475 285h1v1h-1zM475 307h1v1h-1zM475 331h1v1h-1zM475 355h1v1h-1zM476 281h1v1h-1zM476 285h1v1h-1zM476 306h1v1h-1zM476 330h1v1h-1zM476 354h1v1h-1zM477 281h1v1h-1zM477 282h1v1h-1zM477 283h1v1h-1zM477 284h1v1h-1zM477 285h1v1h-1zM477 305h1v1h-1zM477 329h1v1h-1zM477 353h1v1h-1zM478 280h1v1h-1zM478 304h1v1h-1zM478 328h1v1h-1zM478 352h1v1h-1zM479 279h1v1h-1zM479 303h1v1h-1zM479 327h1v1h-1zM479 351h1v1h-1zM480 278h1v1h-1zM480 302h1v1h-1zM480 321h1v1h-1zM480 326h1v1h-1zM480 350h1v1h-1zM481 277h1v1h-1zM481 297h1v1h-1zM481 301h1v1h-1zM481 321h1v1h-1zM481 322h1v1h-1zM481 325h1v1h-1zM481 349h1v1h-1zM482 276h1v1h-1zM482 297h1v1h-1zM482 300h1v1h-1zM482 321h1v1h-1zM482 322h1v1h-1zM482 323h1v1h-1zM482 324h1v1h-1zM482 348h1v1h-1zM483 273h1v1h-1zM483 274h1v1h-1zM483 275h1v1h-1zM483 297h1v1h-1zM483 299h1v1h-1zM483 321h1v1h-1zM483 322h1v1h-1zM483 323h1v1h-1zM483 324h1v1h-1zM483 347h1v1h-1zM484 273h1v1h-1zM484 275h1v1h-1zM484 297h1v1h-1zM484 298h1v1h-1zM484 321h1v1h-1zM484 322h1v1h-1zM484 323h1v1h-1zM484 324h1v1h-1zM484 325h1v1h-1zM484 346h1v1h-1zM485 273h1v1h-1zM485 274h1v1h-1zM485 275h1v1h-1zM485 297h1v1h-1zM485 298h1v1h-1zM485 299h1v1h-1zM485 300h1v1h-1zM485 301h1v1h-1zM485 321h1v1h-1zM485 322h1v1h-1zM485 323h1v1h-1zM485 324h1v1h-1zM485 325h1v1h-1zM485 326h1v1h-1zM485 345h1v1h-1zM495 284h1v1h-1zM495 285h1v1h-1zM495 286h1v1h-1zM495 287h1v1h-1zM496 283h1v1h-1zM496 284h1v1h-1zM496 285h1v1h-1zM496 286h1v1h-1zM496 287h1v1h-1zM496 288h1v1h-1zM496 334h1v1h-1zM497 283h1v1h-1zM497 284h1v1h-1zM497 285h1v1h-1zM497 286h1v1h-1zM497 287h1v1h-1zM497 288h1v1h-1zM497 309h1v1h-1zM497 333h1v1h-1zM498 283h1v1h-1zM498 284h1v1h-1zM498 285h1v1h-1zM498 286h1v1h-1zM498 287h1v1h-1zM498 288h1v1h-1zM499 283h1v1h-1zM499 284h1v1h-1zM499 285h1v1h-1zM499 286h1v1h-1zM499 287h1v1h-1zM499 288h1v1h-1zM499 307h1v1h-1zM499 331h1v1h-1zM500 282h1v1h-1zM500 284h1v1h-1zM500 285h1v1h-1zM500 286h1v1h-1zM500 287h1v1h-1zM500 330h1v1h-1zM501 281h1v1h-1zM501 305h1v1h-1zM502 280h1v1h-1zM502 328h1v1h-1zM503 279h1v1h-1zM503 303h1v1h-1zM503 327h1v1h-1zM504 278h1v1h-1zM504 321h1v1h-1zM505 273h1v1h-1zM505 277h1v1h-1zM505 297h1v1h-1zM505 301h1v1h-1zM505 321h1v1h-1zM505 322h1v1h-1zM505 325h1v1h-1zM506 273h1v1h-1zM506 274h1v1h-1zM506 276h1v1h-1zM506 297h1v1h-1zM506 321h1v1h-1zM506 322h1v1h-1zM506 323h1v1h-1zM506 324h1v1h-1zM507 273h1v1h-1zM507 274h1v1h-1zM507 275h1v1h-1zM507 297h1v1h-1zM507 299h1v1h-1zM507 321h1v1h-1zM507 322h1v1h-1zM507 323h1v1h-1zM507 324h1v1h-1zM508 273h1v1h-1zM508 274h1v1h-1zM508 275h1v1h-1zM508 276h1v1h-1zM508 297h1v1h-1zM508 321h1v1h-1zM508 322h1v1h-1zM508 323h1v1h-1zM508 324h1v1h-1zM508 325h1v1h-1zM509 273h1v1h-1zM509 274h1v1h-1zM509 275h1v1h-1zM509 276h1v1h-1zM509 277h1v1h-1zM509 297h1v1h-1zM509 298h1v1h-1zM509 299h1v1h-1zM509 300h1v1h-1zM509 301h1v1h-1zM509 321h1v1h-1zM509 322h1v1h-1zM509 323h1v1h-1zM509 324h1v1h-1zM509 325h1v1h-1zM509 326h1v1h-1zM510 273h1v1h-1zM510 274h1v1h-1zM510 275h1v1h-1zM510 276h1v1h-1zM510 277h1v1h-1zM510 278h1v1h-1z" fill="#000" shape-rendering="crispEdges"/>
 <rect x="447.3" y="384.6" width="15.2" height="7" rx="3.5" fill="#ccccff" stroke="#000" stroke-width="1"/><circle cx="459" cy="388.1" r="3.5" fill="#ccccff" stroke="#000" stroke-width="1"/>
 <circle cx="478.3" cy="388.4" r="5.6" fill="#ccccff" stroke="#000" stroke-width="1"/><path d="M472 388.4h12.6M478.3 382.1v12.6M473.8 383.9l9 9M482.8 383.9l-9 9" stroke="#000" stroke-width="0.9"/><circle cx="478.3" cy="388.4" r="1.2" fill="#000"/>
 <circle cx="506" cy="385.9" r="4.5" fill="#ccccff" stroke="#000" stroke-width="1"/><path d="M502.8 389.1L498.3 393.6" stroke="#000" stroke-width="1"/>
 <circle cx="454.8" cy="412.3" r="6.9" fill="#ccccff" stroke="#000" stroke-width="1"/><circle cx="454.8" cy="412.3" r="4.3" fill="#ccccff" stroke="#000" stroke-width="1"/><circle cx="454.8" cy="412.3" r="1.7" fill="#ccccff" stroke="#000" stroke-width="1"/>
 <circle cx="478.2" cy="413" r="6.6" fill="#ccccff" stroke="#000" stroke-width="1"/><circle cx="478.2" cy="413" r="4.1" fill="#ccccff" stroke="#000" stroke-width="1"/><circle cx="478.2" cy="413" r="1.6" fill="#ccccff" stroke="#000" stroke-width="1"/><path d="M478.2 413L485.2 405.9" stroke="#000" stroke-width="1"/><path d="M485.8 405.4l-2.6 0.4l2.2 2.2z" fill="#000"/>
 <rect x="497.6" y="406.2" width="11" height="12.6" rx="1" fill="#ccccff" stroke="#000" stroke-width="1"/><rect x="502.3" y="408.2" width="1.8" height="6" fill="#000"/><rect x="502.3" y="415.2" width="1.8" height="1.8" fill="#000"/>
 <path d="M449.5 432.3H462.8L460.3 440.6H447Z" fill="#ccccff" stroke="#000" stroke-width="1"/>
 <path d="M473.5 432.3H486.8L484.3 440.6H471Z M478.5 432.3L476 440.6" fill="#ccccff" stroke="#000" stroke-width="1"/>
 <path d="M499 432.5a3 3 0 0 1 5 -0.5a3 3 0 0 1 5 1.5a3 3 0 0 1 0.5 5a3 3 0 0 1-3.5 4a3 3 0 0 1-5.5 0a3 3 0 0 1-4-4.5a3 3 0 0 1 2.5-5.5z" fill="#ccccff" stroke="#000" stroke-width="1"/>
 <ellipse cx="455" cy="460.6" rx="7.6" ry="5.4" fill="#ccccff" stroke="#000" stroke-width="1"/>
 <path d="M448.5 493.5h11.5a1.5 1.5 0 0 1 1.5 1.5v7.5a1.5 1.5 0 0 1-1.5 1.5h-11.5a1.5 1.5 0 0 1-1.5-1.5v-7.5a1.5 1.5 0 0 1 1.5-1.5z" fill="#f5deb3" stroke="#000" stroke-width="1"/><path d="M461.5 496v5.5h1.2v-5.5z" fill="#000"/><path d="M450.5 495.8v6M452.8 495.8v6M455.1 495.8v6" stroke="#000" stroke-width="1"/>
 <path d="M471.7 505V500H476.7V495H481.4V490.5H486V505Z" fill="#f5deb3" stroke="#000" stroke-width="1"/><path d="M471.7 500H486M476.7 495H486M476.7 500V505M481.4 495V505" stroke="#000" stroke-width="0.9"/>
 <path d="M495.3 492.3H505.5L510.3 498.5L505.5 504.7H495.3L499.8 498.5Z" fill="#f5deb3" stroke="#000" stroke-width="1"/>
 <circle cx="457" cy="519.3" r="4.9" fill="#f5deb3" stroke="#000" stroke-width="1"/><circle cx="457" cy="519.3" r="2.6" fill="#f5deb3" stroke="#000" stroke-width="1"/><circle cx="457" cy="519.3" r="0.9" fill="#000"/><path d="M447.8 528.5L452.8 523.5" stroke="#000" stroke-width="1.6"/><path d="M454 522.2l-4 1l3 3z" fill="#000"/>
 <circle cx="454.5" cy="553.8" r="2.7" fill="#ffffb5" stroke="#000" stroke-width="1"/><path d="M454.5 556.5V562.5M450.3 558.8H458.7M450.2 567L454.5 562.5L458.8 567" stroke="#000" stroke-width="1" fill="none"/>
 <rect x="471.5" y="554.2" width="14.6" height="7.6" rx="3.8" fill="#ffffb5" stroke="#000" stroke-width="1"/><ellipse cx="482.3" cy="558" rx="3.7" ry="3.8" fill="#ffffb5" stroke="#000" stroke-width="1"/>
 <ellipse cx="500.7" cy="558.6" rx="5.3" ry="5.2" fill="#ffffb5"/><ellipse cx="505.3" cy="558.6" rx="5.3" ry="5.2" fill="#ffffb5"/><ellipse cx="500.7" cy="558.6" rx="5.3" ry="5.2" fill="none" stroke="#000" stroke-width="1"/><ellipse cx="505.3" cy="558.6" rx="5.3" ry="5.2" fill="none" stroke="#000" stroke-width="1"/>
 <path d="M447 582.5H452" stroke="#000" stroke-width="1"/><circle cx="457.5" cy="582.5" r="4.7" fill="#ffffb5" stroke="#000" stroke-width="1"/>
 <path d="M472 579.8H479V577.5L485.5 582.5L479 587.5V585.2H472Z" fill="#ffffb5" stroke="#000" stroke-width="1"/>
 <path d="M495.8 581L502.4 575.8L509 581V589.5L502.4 584.3L495.8 589.5Z" fill="#ffffb5" stroke="#000" stroke-width="1"/>
 <g clip-path="url(#palclip)"><path d="M448 612V603a4 4 0 0 1 8 0V612Z M451.5 612V602.5a2 2 0 0 1 2 -2" fill="#ffffb5" stroke="#000" stroke-width="1"/><path d="M452 599.5a4 4 0 0 1 8 3.5V612h-8z" fill="#ffffb5" stroke="#000" stroke-width="1"/><path d="M472 600H481a4 4 0 0 1 4 4V612H474V604Z" fill="#ffffb5" stroke="#000" stroke-width="1"/><path d="M496 612V604a4 4 0 0 1 4-4h6a4 4 0 0 1 4 4V612Z" fill="#ffffb5" stroke="#000" stroke-width="1"/></g>
 <path d="M472.5 621.5L479 627.5L485.5 621.5" fill="none" stroke="#c9ced2" stroke-width="2.2"/>
 <g clip-path="url(#cvclip)">
  <rect x="563.5" y="207" width="326.6" height="460" fill="#fff" stroke="#b3b3b3" stroke-width="2"/>
  <rect x="563.3" y="192.1" width="222.4" height="14.2" fill="#e6e6e6" stroke="#999" stroke-width="1.7"/>
  <rect x="895.9" y="206.5" width="400" height="265.3" fill="#fff" stroke="#b3b3b3" stroke-width="2"/>
  <rect x="895.9" y="192.1" width="241.3" height="14.4" fill="#e6e6e6" stroke="#999" stroke-width="1.7"/>
  <rect x="895.9" y="492.2" width="400" height="300" fill="#fff" stroke="#b3b3b3" stroke-width="2"/>
  <rect x="895.9" y="478.2" width="241.3" height="14" fill="#e6e6e6" stroke="#999" stroke-width="1.7"/>
  <g font-family="Liberation Sans" font-size="11.6" fill="#333">
   <text x="566" y="200.9">Partners</text>
   <text x="898.5" y="200.9">Key Activities</text>
   <text x="898.5" y="486.7">Key Resourcss</text>
  </g>
  <g font-family="Liberation Sans" font-size="12" fill="#3c3c3c">
  <path d="M580.8 257.4H711.4L716.4 262.4V340.4L711.4 345.4H580.8L575.8 340.4V262.4Z" fill="#ccccff" stroke="#9a9acc" stroke-width="1"/>
 <path d="M706.3 264.6H697.5999999999999a4.4 4.4 0 0 0 0 8.8H706.3" fill="none" stroke="#333" stroke-width="1.2"/><circle cx="706.3" cy="269.0" r="4.3" fill="none" stroke="#333" stroke-width="1.3"/>
 <text x="636.8" y="273.7" text-anchor="middle">Insurance</text>
 <text x="636.8" y="287.6" text-anchor="middle">Intermediaries</text>
 <path d="M740.3 257.4H870.9L875.9 262.4V340.4L870.9 345.4H740.3L735.3 340.4V262.4Z" fill="#ccccff" stroke="#9a9acc" stroke-width="1"/>
 <path d="M865.8 264.6H857.0999999999999a4.4 4.4 0 0 0 0 8.8H865.8" fill="none" stroke="#333" stroke-width="1.2"/><circle cx="865.8" cy="269.0" r="4.3" fill="none" stroke="#333" stroke-width="1.3"/>
 <text x="796.3" y="273.7" text-anchor="middle">Banks</text>
 <path d="M580.8 424.6H711.4L716.4 429.6V507.6L711.4 512.6H580.8L575.8 507.6V429.6Z" fill="#ccccff" stroke="#9a9acc" stroke-width="1"/>
 <path d="M706.3 431.80000000000007H697.5999999999999a4.4 4.4 0 0 0 0 8.8H706.3" fill="none" stroke="#333" stroke-width="1.2"/><circle cx="706.3" cy="436.20000000000005" r="4.3" fill="none" stroke="#333" stroke-width="1.3"/>
 <text x="636.8" y="440.9" text-anchor="middle">Car Rental</text>
 <text x="636.8" y="454.8" text-anchor="middle">Companies</text>
 <path d="M740.3 424.6H870.9L875.9 429.6V507.6L870.9 512.6H740.3L735.3 507.6V429.6Z" fill="#ccccff" stroke="#9a9acc" stroke-width="1"/>
 <path d="M865.8 431.80000000000007H857.0999999999999a4.4 4.4 0 0 0 0 8.8H865.8" fill="none" stroke="#333" stroke-width="1.2"/><circle cx="865.8" cy="436.20000000000005" r="4.3" fill="none" stroke="#333" stroke-width="1.3"/>
 <text x="796.3" y="440.9" text-anchor="middle">Automobile Repair</text>
 <text x="796.3" y="454.8" text-anchor="middle">Shops</text>
 <path d="M660.4 586.2H791.0L796.0 591.2V669.2L791.0 674.2H660.4L655.4 669.2V591.2Z" fill="#ccccff" stroke="#9a9acc" stroke-width="1"/>
 <path d="M785.9 593.4000000000001H777.1999999999999a4.4 4.4 0 0 0 0 8.8H785.9" fill="none" stroke="#333" stroke-width="1.2"/><circle cx="785.9" cy="597.8000000000001" r="4.3" fill="none" stroke="#333" stroke-width="1.3"/>
 <text x="716.4" y="602.5" text-anchor="middle">Advertising Outlets</text>
 <rect x="915.8" y="238.6" width="140.6" height="87.6" rx="12" fill="#f9dfad" stroke="#c4a574" stroke-width="1"/>
 <path d="M1037.3999999999999 258.3V254.7H1041.1999999999998V250.9H1044.9999999999998V247.1H1048.8V258.3Z" fill="none" stroke="#222" stroke-width="1"/><path d="M1037.3999999999999 256.5H1048.8M1041.1999999999998 252.79999999999998H1048.8M1044.9999999999998 249.0H1048.8M1039.3 254.7V258.3M1041.1999999999998 254.7V258.3M1043.1 250.9V258.3M1044.9999999999998 250.9V258.3M1046.8999999999999 247.1V258.3" stroke="#222" stroke-width="0.7"/>
 <text x="979.3" y="256.8" text-anchor="middle">Product</text>
 <text x="979.3" y="270.7" text-anchor="middle">Management</text>
 <rect x="1085.7" y="238.6" width="140.6" height="87.6" rx="12" fill="#f9dfad" stroke="#c4a574" stroke-width="1"/>
 <path d="M1207.3 258.3V254.7H1211.1V250.9H1214.8999999999999V247.1H1218.7V258.3Z" fill="none" stroke="#222" stroke-width="1"/><path d="M1207.3 256.5H1218.7M1211.1 252.79999999999998H1218.7M1214.8999999999999 249.0H1218.7M1209.2 254.7V258.3M1211.1 254.7V258.3M1213.0 250.9V258.3M1214.8999999999999 250.9V258.3M1216.8 247.1V258.3" stroke="#222" stroke-width="0.7"/>
 <text x="1149.2" y="256.8" text-anchor="middle">Asset Management</text>
 <rect x="915.8" y="357.6" width="140.6" height="87.6" rx="12" fill="#f9dfad" stroke="#c4a574" stroke-width="1"/>
 <path d="M1037.3999999999999 377.3V373.70000000000005H1041.1999999999998V369.90000000000003H1044.9999999999998V366.1H1048.8V377.3Z" fill="none" stroke="#222" stroke-width="1"/><path d="M1037.3999999999999 375.5H1048.8M1041.1999999999998 371.8H1048.8M1044.9999999999998 368.0H1048.8M1039.3 373.70000000000005V377.3M1041.1999999999998 373.70000000000005V377.3M1043.1 369.90000000000003V377.3M1044.9999999999998 369.90000000000003V377.3M1046.8999999999999 366.1V377.3" stroke="#222" stroke-width="0.7"/>
 <text x="979.3" y="375.8" text-anchor="middle">Customer</text>
 <text x="979.3" y="389.7" text-anchor="middle">Management</text>
 <rect x="1085.7" y="357.6" width="140.6" height="87.6" rx="12" fill="#f9dfad" stroke="#c4a574" stroke-width="1"/>
 <path d="M1207.3 377.3V373.70000000000005H1211.1V369.90000000000003H1214.8999999999999V366.1H1218.7V377.3Z" fill="none" stroke="#222" stroke-width="1"/><path d="M1207.3 375.5H1218.7M1211.1 371.8H1218.7M1214.8999999999999 368.0H1218.7M1209.2 373.70000000000005V377.3M1211.1 373.70000000000005V377.3M1213.0 369.90000000000003V377.3M1214.8999999999999 369.90000000000003V377.3M1216.8 366.1V377.3" stroke="#222" stroke-width="0.7"/>
 <text x="1149.2" y="375.8" text-anchor="middle">Policy and Claims</text>
 <text x="1149.2" y="389.7" text-anchor="middle">Management</text>
  </g>
 </g>
 <rect x="1166" y="175" width="8" height="459" fill="#c8cacd"/>
 <rect x="1166" y="196" width="8" height="199" rx="4" fill="#6b7882"/>
 <rect x="523" y="634" width="643" height="5" fill="#c8cacd"/>
 <rect x="523.4" y="634.3" width="168.3" height="8" rx="4" fill="#6b7882"/>
 <path d="M1202 194.5L1209 188L1216 194.5" fill="none" stroke="#e6e8eb" stroke-width="2.2"/>
 <rect x="1182.2" y="207.3" width="54" height="23" rx="11.5" fill="#f7f8f9"/>
 <rect x="1182.2" y="236.5" width="54" height="23" rx="11.5" fill="#f7f8f9"/>
 <rect x="1182.2" y="274.5" width="54" height="23" rx="11.5" fill="#f7f8f9"/>
 <rect x="1182.2" y="303.5" width="54" height="23" rx="11.5" fill="#f7f8f9"/>
 <rect x="1182.2" y="407.5" width="54" height="23" rx="11.5" fill="#f7f8f9"/>
 <rect x="1182.2" y="437.5" width="54" height="23" rx="11.5" fill="#f7f8f9"/>
 <rect x="1182.2" y="371.4" width="54" height="23" rx="11.5" fill="#f7f8f9"/>
 <rect x="1182.2" y="475.5" width="54" height="23" rx="11.5" fill="#f7f8f9"/>
 <path d="M1187 267.2H1231" stroke="#a9c0cc" stroke-width="1.2"/>
 <path d="M1187 364.5H1231" stroke="#a9c0cc" stroke-width="1.2"/>
 <path d="M1187 401.7H1231" stroke="#a9c0cc" stroke-width="1.2"/>
 <path d="M1187 468H1231" stroke="#a9c0cc" stroke-width="1.2"/>
 <path d="M1187 505H1231" stroke="#a9c0cc" stroke-width="1.2"/>
 <path d="M1187 602.4H1231" stroke="#a9c0cc" stroke-width="1.2"/>
 <rect x="1202" y="212.5" width="12" height="12" fill="none" stroke="#b2bbc1" stroke-width="1"/><rect x="1203.5" y="214" width="6" height="6" fill="#dde1e4"/><rect x="1208" y="218.5" width="5" height="5" fill="#e3e6e9"/><g fill="#a9b2b9"><rect x="1201" y="211.5" width="2.4" height="2.4"/><rect x="1212.8" y="211.5" width="2.4" height="2.4"/><rect x="1201" y="223.3" width="2.4" height="2.4"/><rect x="1212.8" y="223.3" width="2.4" height="2.4"/></g>
 <rect x="1201.5" y="241" width="8" height="8" fill="none" stroke="#b2bbc1" stroke-width="1"/><rect x="1206" y="245.5" width="8" height="8" fill="none" stroke="#b2bbc1" stroke-width="1"/><rect x="1202.5" y="242" width="6" height="6" fill="#dde1e4"/>
 <rect x="1202.5" y="285" width="11" height="8.5" rx="1" fill="none" stroke="#b2bbc1" stroke-width="1" stroke-width="1.2"/><path d="M1204.8 285v-2.5a3.2 3.2 0 0 1 6.4 0v2.5" fill="none" stroke="#b2bbc1" stroke-width="1" stroke-width="1.2"/><rect x="1207.4" y="288" width="1.2" height="2.5" fill="#b2bbc1"/>
 <path d="M1201.5 315.5c3-4.5 10-4.5 13 0c-3 4.5-10 4.5-13 0z" fill="none" stroke="#b2bbc1" stroke-width="1" stroke-width="1.2"/><circle cx="1208" cy="315.5" r="1.8" fill="#b2bbc1"/><path d="M1203 321l10-11" fill="none" stroke="#b2bbc1" stroke-width="1" stroke-width="1.2"/>
 <path d="M1201.5 345.5c3-4.2 10-4.2 13 0c-3 4.2-10 4.2-13 0z" fill="none" stroke="#5a6d78" stroke-width="1.1"/><circle cx="1208" cy="345.5" r="1.9" fill="none" stroke="#5a6d78" stroke-width="1"/>
 <g fill="#aab5bc"><rect x="1191.3" y="378.9" width="1.6" height="7"/><rect x="1193.7" y="378.9" width="1.6" height="7"/><path d="M1187 382.4l2.8-2.6v5.2z M1199.8 382.4l-2.8-2.6v5.2z"/><rect x="1189" y="381.8" width="9" height="1.2"/></g><path d="M1217.2 381l4 4l4-4" fill="none" stroke="#8795a0" stroke-width="1.4"/><rect x="1204" y="414" width="8" height="8" fill="#b5bec4"/><rect x="1206.5" y="416.5" width="8" height="8" fill="none" stroke="#b5bec4" stroke-width="1"/><rect x="1201.5" y="411.5" width="8" height="8" fill="none" stroke="#c3cad0" stroke-width="1"/>
 <rect x="1201.5" y="441.5" width="7" height="7" fill="none" stroke="#b5bec4" stroke-width="1"/><rect x="1207" y="447" width="7" height="7" fill="none" stroke="#b5bec4" stroke-width="1"/><rect x="1205" y="445" width="4" height="4" fill="#b5bec4"/>
 <g fill="#b2bbc1"><rect x="1187" y="480" width="1.3" height="14"/><rect x="1189.5" y="481" width="6" height="4.5"/><rect x="1189.5" y="487.5" width="10.5" height="4.5"/></g><path d="M1217 485l4 4l4-4" fill="none" stroke="#b2bbc1" stroke-width="1.4"/>
 <path d="M1188 519l5-3l4.5 5l-4 3.5l-5-2.2z" fill="none" stroke="#3c4a55" stroke-width="1.1"/><path d="M1196 518.5c1.5-1.2 2.6 0 2.6 2" fill="none" stroke="#3c4a55" stroke-width="1"/><path d="M1200.8 517v10" stroke="#56c2f0" stroke-width="1.3" stroke-dasharray="1.2 0.8"/>
 <rect x="1186.7" y="551.5" width="12.5" height="4.2" fill="#4f5f68"/><path d="M1200.8 548v10" stroke="#56c2f0" stroke-width="1.3" stroke-dasharray="1.2 0.8"/>
 <rect x="1187.3" y="577.2" width="10.5" height="10.5" fill="none" stroke="#2d3a45" stroke-width="1.2"/><path d="M1188 589h11v-11" fill="none" stroke="#4f5f68" stroke-width="2"/>
 <path d="M1216.5 521.5l4.5 4.4l4.5-4.4" fill="none" stroke="#243447" stroke-width="1.6"/>
 <path d="M1216.5 551.5l4.5 4.4l4.5-4.4" fill="none" stroke="#243447" stroke-width="1.6"/>
 <path d="M1216.5 580.8l4.5 4.4l4.5-4.4" fill="none" stroke="#243447" stroke-width="1.6"/>
 <path d="M1202 621l7 6.5l7-6.5" fill="none" stroke="#d2d6da" stroke-width="2.2"/>
</svg>

</body></html>
